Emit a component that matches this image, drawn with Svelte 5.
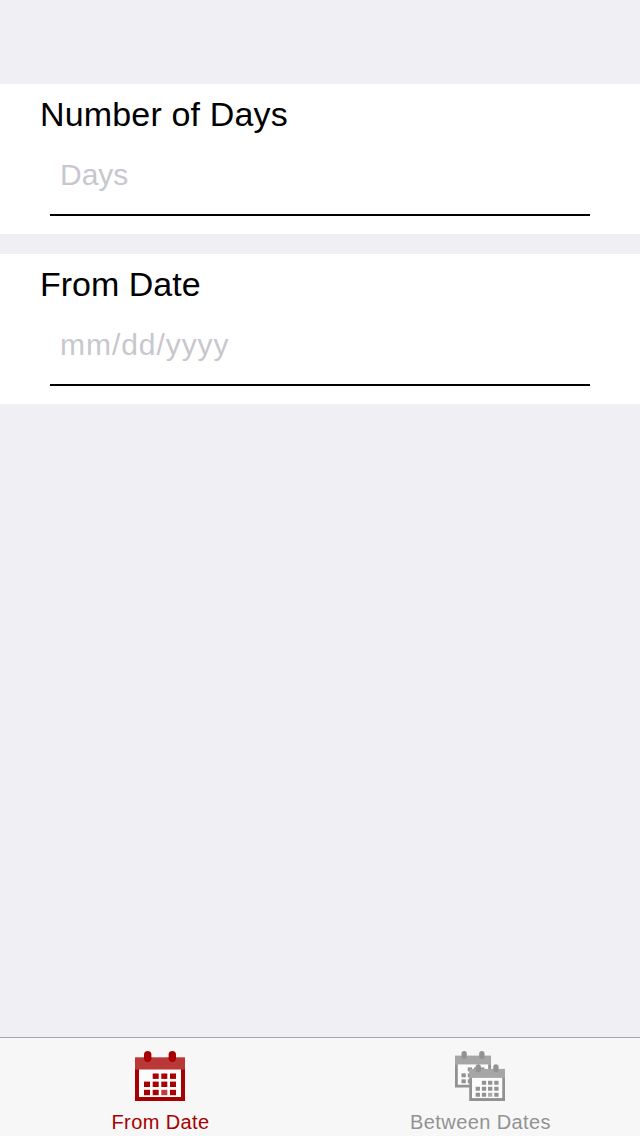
<script>
  const fields = [
    { id: 'days', label: 'Number of Days', hint: 'Days' },
    { id: 'date', label: 'From Date', hint: 'mm/dd/yyyy' }
  ];
  const cols = [9, 17.7, 26.3, 35];
  const rows = [22.5, 30.6, 38.8];
</script>

{#snippet calendar()}
  <rect class="bar" x="0" y="6.3" width="50" height="12.7" />
  <path class="solid" fill-rule="evenodd" d="M0 18.5H50V50H0ZM4 18.5V46H46V18.5Z" />
  <rect class="paper" x="4" y="18.5" width="42" height="27.5" />
  <rect class="solid" x="9" y="0" width="7.4" height="11" rx="3.7" />
  <rect class="solid" x="33.6" y="0" width="7.4" height="11" rx="3.7" />
  {#each rows as y, r}
    {#each cols as x, c}
      {#if r + c > 0}
        <rect class={r === 2 && c === 2 ? 'solid dim' : 'solid'} {x} {y} width="6" height="5.4" />
      {/if}
    {/each}
  {/each}
{/snippet}

<div class="screen">
  <main>
    {#each fields as f}
      <section>
        <label class={f.id} for={f.id}>{f.label}</label>
        <input class={f.id} id={f.id} placeholder={f.hint} />
      </section>
    {/each}
  </main>
  <nav>
    <button class="tab active">
      <svg width="50" height="50" viewBox="0 0 50 50">{@render calendar()}</svg>
      <span>From Date</span>
    </button>
    <button class="tab">
      <svg width="50" height="50" viewBox="0 0 50 50">
        <g transform="scale(.72 .73)">{@render calendar()}</g>
        <g transform="translate(14.2 13.3) scale(.716 .734)">{@render calendar()}</g>
      </svg>
      <span>Between Dates</span>
    </button>
  </nav>
</div>

<style>
  .screen {
    display: flex;
    flex-direction: column;
    width: 640px;
    height: 1136px;
    background: #efeff4;
    font-family: "Liberation Sans", Arial, sans-serif;
  }
  main {
    flex: 1;
    display: flex;
    flex-direction: column;
    gap: 20px;
    padding-top: 84px;
  }
  section {
    box-sizing: border-box;
    height: 150px;
    padding: 10px 50px 18px 40px;
    background: #fff;
    display: flex;
    flex-direction: column;
  }
  label {
    font-size: 34px;
    line-height: 40px;
    color: #000;
  }
  label.days { letter-spacing: .16px; }
  input {
    box-sizing: border-box;
    height: 82px;
    margin: 0 0 0 10px;
    padding: 2px 10px 0;
    border: 0;
    border-bottom: 2px solid #000;
    border-radius: 0;
    background: none;
    outline: 0;
    font: 30px "Liberation Sans", Arial, sans-serif;
  }
  input.date { letter-spacing: .95px; }
  input::placeholder {
    color: #c7c7cd;
    opacity: 1;
  }
  nav {
    box-sizing: border-box;
    height: 99px;
    display: flex;
    border-top: 1px solid #a7a7b0;
    background: #f7f7f7;
  }
  .tab {
    flex: 1;
    display: flex;
    flex-direction: column;
    align-items: center;
    padding: 13px 0 0;
    border: 0;
    background: none;
    color: #929292;
    font: 20px/24px "Liberation Sans", Arial, sans-serif;
    letter-spacing: .4px;
  }
  .tab.active { color: #a60000; }
  .tab span { margin: 9px 0 0 1px; }
  .solid { fill: currentColor; }
  .dim { opacity: .75; }
  .bar { fill: #a6a6a6; }
  .active .bar { fill: #ba3838; }
  .paper { fill: #fcfcfc; }
</style>
